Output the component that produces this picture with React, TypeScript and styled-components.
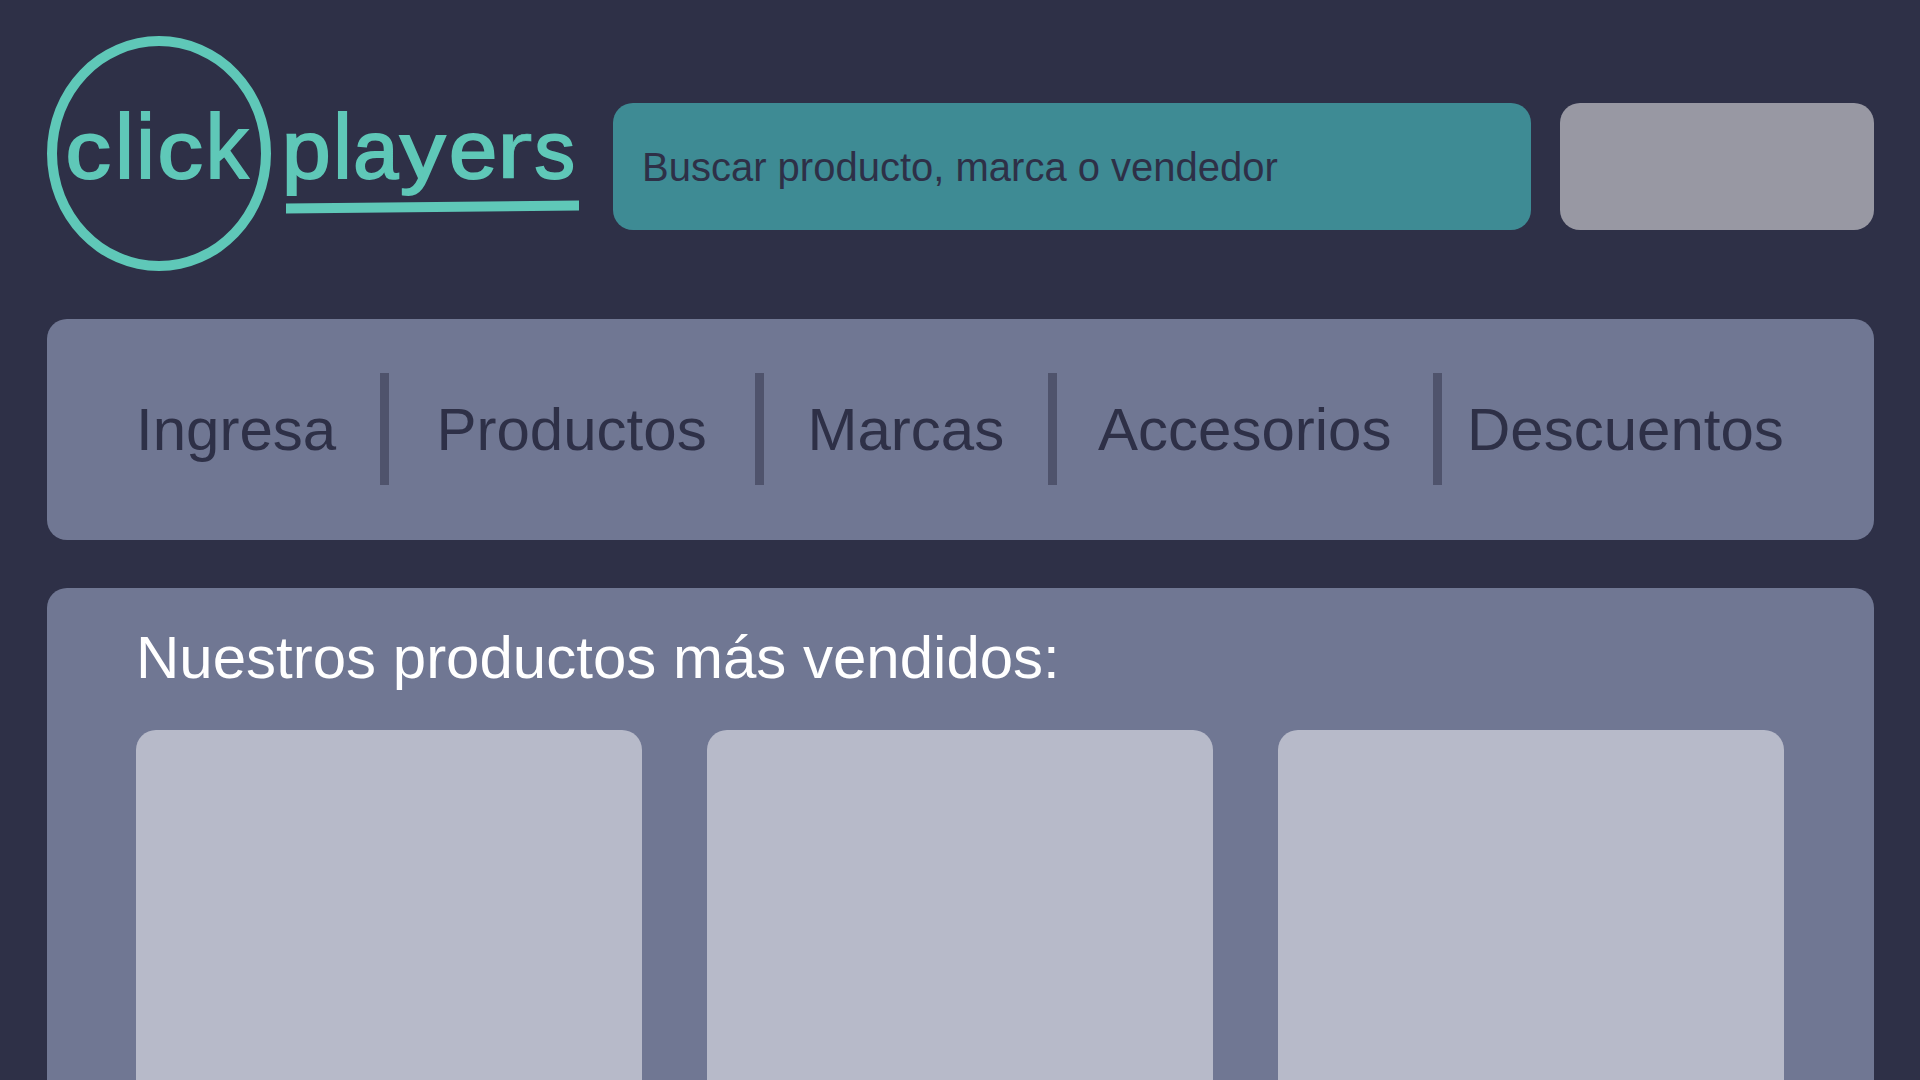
import React from "react";
import styled, { createGlobalStyle } from "styled-components";

const color = {
  night: "#2e3047",
  mint: "#5fc8b8",
  teal: "#3e8b94",
  slate: "#707793",
  fog: "#9898a3",
  card: "#b7bac9",
  divider: "#4f536c",
};

const GlobalStyle = createGlobalStyle`
  *, *::before, *::after { box-sizing: border-box; }
  body {
    margin: 0;
    background: ${color.night};
    font-family: "Liberation Sans", Arial, Helvetica, sans-serif;
    overflow: hidden;
  }
`;

const Page = styled.div`
  display: flex;
  flex-direction: column;
  gap: 48px;
  width: 1920px;
  height: 1080px;
  padding: 36px 46px 0 47px;
  overflow: hidden;
`;

const Header = styled.header`
  display: flex;
  align-items: flex-start;
  height: 235px;
  flex: none;
`;

const Logo = styled.div`
  display: flex;
  gap: 15px;
  width: 566px;
  flex: none;
  color: ${color.mint};
`;

const Ring = styled.div`
  width: 224px;
  height: 235px;
  padding: 64px 0 0 10px;
  border: 10px solid ${color.mint};
  border-radius: 50%;
  flex: none;
`;

const Players = styled.div`
  padding-top: 74px;
  width: 292.5px;
`;

const Word = styled.div`
  display: flex;
  height: 81px;
  font-size: 81px;
  line-height: 81px;
`;

const Letter = styled.span<{ $slot: number; $shift: number; $sx: number; $sy: number; $stroke: number }>`
  display: inline-block;
  flex: none;
  width: ${(p) => p.$slot}px;
  -webkit-text-stroke: ${(p) => p.$stroke}px ${color.mint};
  transform-origin: 0 68.5px;
  transform: translateX(${(p) => p.$shift}px) scale(${(p) => p.$sx}, ${(p) => p.$sy});
`;

const Underline = styled.div`
  height: 10px;
  margin-top: 10.5px;
  background: ${color.mint};
  transform: skewY(-0.58deg);
`;

const Search = styled.div`
  width: 918px;
  height: 127px;
  margin: 67px 29px 0 0;
  padding: 44px 29px 0;
  border-radius: 20px;
  background: ${color.teal};
  color: ${color.night};
  font-size: 40px;
  line-height: 40px;
  white-space: nowrap;
`;

const Account = styled.div`
  width: 314px;
  height: 127px;
  margin-top: 67px;
  border-radius: 20px;
  background: ${color.fog};
`;

const Nav = styled.nav`
  display: grid;
  grid-template-columns: 244px 9px 366px 9px 284px 9px 376px 9px 1fr;
  flex: none;
  height: 221px;
  padding: 54px 0 0 89px;
  border-radius: 20px;
  background: ${color.slate};
`;

const NavItem = styled.a<{ $indent: number }>`
  padding: 27px 0 0 ${(p) => p.$indent}px;
  color: ${color.night};
  font-size: 60px;
  line-height: 60px;
  white-space: nowrap;
`;

const Divider = styled.span`
  height: 111.6px;
  background: ${color.divider};
`;

const BestSellers = styled.section`
  flex: none;
  height: 600px;
  padding: 40px 90px 0 89px;
  border-radius: 20px;
  background: ${color.slate};
`;

const Heading = styled.h1`
  margin: 0 0 42px;
  color: #fff;
  font-size: 60px;
  font-weight: 400;
  line-height: 60px;
  white-space: nowrap;
`;

const Cards = styled.div`
  display: grid;
  grid-template-columns: repeat(3, 506px);
  gap: 65px;
`;

const Card = styled.article`
  height: 506px;
  border-radius: 20px;
  background: ${color.card};
`;

type Glyph = [char: string, slot: number, shift: number, sx: number, sy: number, stroke: number];

const click: Glyph[] = [
  ["c", 52, -1.5, 1.12, 1, 2],
  ["l", 21, -3.5, 1, 1.115, 2],
  ["i", 19, -3.5, 1, 1.115, 2],
  ["c", 50, -1.5, 1.12, 1, 2],
  ["k", 42, -3.5, 1.06, 1.115, 1.6],
];

const players: Glyph[] = [
  ["p", 51, -4, 1.08, 1, 2],
  ["l", 17.7, -3.5, 1, 1.115, 2],
  ["a", 45.3, -1.5, 1.0, 1, 2],
  ["y", 51, 0, 1.12, 0.98, 2],
  ["e", 51, -2, 1.07, 1, 2],
  ["r", 34, -6, 1.36, 1, 0.6],
  ["s", 38, -1.5, 1.0, 1, 2],
];

const Lettering = ({ glyphs }: { glyphs: Glyph[] }) => (
  <Word>
    {glyphs.map(([char, slot, shift, sx, sy, stroke], i) => (
      <Letter key={i} $slot={slot} $shift={shift} $sx={sx} $sy={sy} $stroke={stroke}>
        {char}
      </Letter>
    ))}
  </Word>
);

const links = [
  { label: "Ingresa", indent: 0 },
  { label: "Productos", indent: 47.5 },
  { label: "Marcas", indent: 43.5 },
  { label: "Accesorios", indent: 41 },
  { label: "Descuentos", indent: 25 },
];

export default function App() {
  return (
    <>
      <GlobalStyle />
      <Page>
        <Header>
          <Logo>
            <Ring>
              <Lettering glyphs={click} />
            </Ring>
            <Players>
              <Lettering glyphs={players} />
              <Underline />
            </Players>
          </Logo>
          <Search>Buscar producto, marca o vendedor</Search>
          <Account />
        </Header>
        <Nav>
          {links.map(({ label, indent }, i) => (
            <React.Fragment key={label}>
              {i > 0 && <Divider />}
              <NavItem $indent={indent}>{label}</NavItem>
            </React.Fragment>
          ))}
        </Nav>
        <BestSellers>
          <Heading>Nuestros productos más vendidos:</Heading>
          <Cards>
            <Card />
            <Card />
            <Card />
          </Cards>
        </BestSellers>
      </Page>
    </>
  );
}
